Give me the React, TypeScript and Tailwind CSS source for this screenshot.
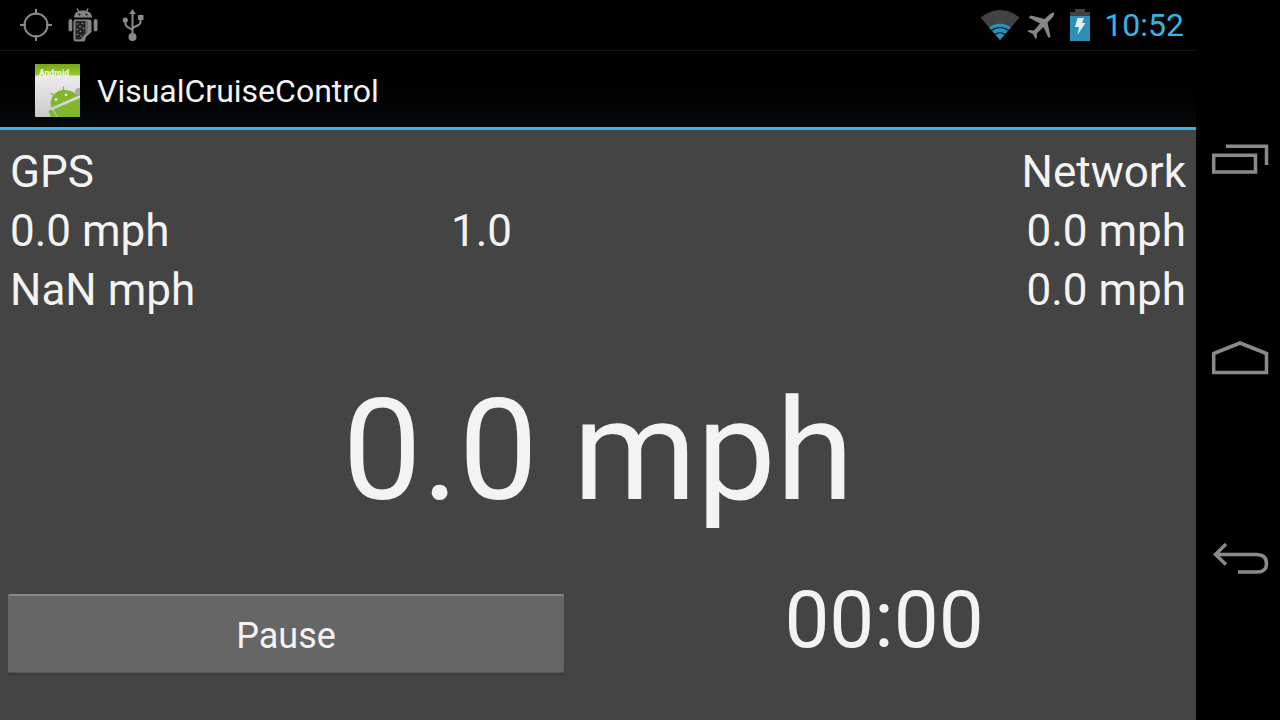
import React from "react";

function GpsIcon() {
  return (
    <svg width="32" height="34" viewBox="0 0 32 34" fill="none" stroke="#8a8a8a" strokeWidth="2" aria-hidden="true">
      <circle cx="16" cy="17" r="11.5" />
      <path d="M16 1v6M16 27v6M0 17h6M26 17h6" />
    </svg>
  );
}

function DebugIcon() {
  return (
    <svg width="30" height="34" viewBox="0 0 30 34" aria-hidden="true">
      <g fill="#858585">
        <path d="M6 9.500C6 5 10 2.500 15 2.500S24 5 24 9.500Z" />
        <rect x="0.500" y="11" width="3.800" height="12.500" rx="1.900" />
        <rect x="25.700" y="11" width="3.800" height="12.500" rx="1.900" />
        <path d="M8 11.500H21C23 11.500 23.500 12.500 23.500 14V24L18 29L16.500 33.500H8C6 33.500 5.500 32 5.500 31V14C5.500 12 6 11.500 8 11.500Z" />
      </g>
      <path d="M9 0.500L11 4M20 0.500L18.500 4" stroke="#858585" strokeWidth="1.500" />
      <path d="M7.500 13H17.500V25L12.500 31.500H7.500Z" fill="#242424" />
      <path d="M19 13V24L13 31" fill="none" stroke="#555" strokeWidth="1" />
      <g fill="#929292">
        <circle cx="9.500" cy="16" r="0.800" /><circle cx="14.500" cy="15.500" r="0.800" />
        <circle cx="12" cy="18.500" r="0.800" /><circle cx="15.500" cy="20.500" r="0.800" />
        <circle cx="9.500" cy="21.500" r="0.800" /><circle cx="12.500" cy="23.500" r="0.800" />
        <circle cx="9.500" cy="26.500" r="0.800" /><circle cx="13" cy="28" r="0.800" />
      </g>
      <circle cx="11.500" cy="6.500" r="1" fill="#111" />
      <circle cx="18.500" cy="6.500" r="1" fill="#111" />
    </svg>
  );
}

function UsbIcon() {
  return (
    <svg width="22" height="34" viewBox="0 0 22 34" aria-hidden="true">
      <path d="M10.500 4V28M3.500 13V16Q3.500 18 5.500 19L10.500 22M18.500 9V14Q18.500 16 16.500 17L10.500 20" fill="none" stroke="#8a8a8a" strokeWidth="2" />
      <g fill="#8a8a8a">
        <path d="M10.500 1L14 6H7Z" />
        <circle cx="3.300" cy="12" r="2.600" />
        <rect x="16" y="7" width="5.500" height="5" />
        <circle cx="10.500" cy="29" r="4" />
      </g>
    </svg>
  );
}

function WifiIcon() {
  return (
    <svg width="40" height="32" viewBox="0 0 40 32" aria-hidden="true">
      <path d="M0.500 8.500Q20-6.500 39.500 8.500L20 31Z" fill="#424242" />
      <path d="M9 18.200Q20 10.800 31 18.200L20 31Z" fill="#2b91ba" />
      <path d="M11 21.500Q20 15.500 29 21.500M14.500 25.500Q20 22 25.500 25.500" fill="none" stroke="#061216" strokeWidth="1.200" />
    </svg>
  );
}

function AirplaneIcon() {
  return (
    <svg width="28" height="30" viewBox="0 -2 28 30" aria-hidden="true">
      <path d="M27 0.500C25.500 0 23.500 1.500 22 3L17.500 7L4 3.500L1.500 5.500L13 11.500L7 18.500L2 18L0.500 19.500L6 22L8.500 27L10 25.500L9.800 21.500L16.500 15L21.500 26L23.500 24.500L20.500 10.500L25 6C26.500 4.500 27.500 2 27 0.500Z" fill="#868686" />
    </svg>
  );
}

function BatteryIcon() {
  return (
    <svg width="20" height="32" viewBox="0 0 20 32" aria-hidden="true">
      <path d="M0 3H5V0H15V3H20V7H0Z" fill="#424242" />
      <rect y="7" width="20" height="25" fill="#2e8fb7" />
      <path d="M7.500 9H14L12 14H15.500L7.500 26L9 18H5Z" fill="#e0edf1" />
    </svg>
  );
}

function AppIcon() {
  return (
    <svg width="46" height="54" viewBox="0 0 46 54" aria-hidden="true">
      <defs>
        <linearGradient id="paper" x1="0" y1="0" x2="0" y2="1">
          <stop offset="0" stopColor="#f5f5f5" />
          <stop offset="1" stopColor="#cacaca" />
        </linearGradient>
        <linearGradient id="band" x1="0" y1="0" x2="0" y2="1">
          <stop offset="0" stopColor="#76a51a" />
          <stop offset="1" stopColor="#98cb32" />
        </linearGradient>
        <clipPath id="page"><rect width="45" height="53" rx="1" /></clipPath>
      </defs>
      <g clipPath="url(#page)">
        <rect width="45" height="53" fill="url(#paper)" />
        <rect width="45" height="11.500" fill="url(#band)" />
        <text x="4" y="12" fill="#f7ffe8" fontFamily="Roboto, sans-serif" fontSize="8.500" fontWeight="700">Android</text>
        <circle cx="44" cy="28" r="4" fill="#aaa" />
        <g fill="#83b62c">
          <path d="M16.500 43.500C13.500 35 20 26.500 28 26C35 25.500 40.500 28.500 42.500 32Z" />
          <path d="M18.500 45.500L45 34V53H23Z" />
          <path d="M13.500 47.500C15 45 17.500 45.500 19 48L22 53H16Z" />
        </g>
        <path d="M20 32L15.500 29M28.500 27V22.500" stroke="#83b62c" strokeWidth="1.300" />
        <circle cx="21" cy="35.500" r="1.300" fill="#f5f5f5" />
        <circle cx="31" cy="31" r="1.300" fill="#f5f5f5" />
      </g>
    </svg>
  );
}

function RecentsIcon() {
  return (
    <svg width="58" height="32" viewBox="0 0 58 32" fill="none" stroke="#8a8a8a" strokeWidth="3.500" aria-hidden="true">
      <path d="M2.700 12.200H44.500V29H2.700ZM15 3.200H55.500V22" />
    </svg>
  );
}

function HomeIcon() {
  return (
    <svg width="58" height="36" viewBox="0 0 58 36" fill="none" stroke="#8a8a8a" strokeWidth="3.500" aria-hidden="true">
      <path d="M2.700 31.500V12.500L29 2L55.500 12.500V31.500Z" />
    </svg>
  );
}

function BackIcon() {
  return (
    <svg width="58" height="32" viewBox="0 0 58 32" fill="none" stroke="#8a8a8a" strokeWidth="3.500" aria-hidden="true">
      <path d="M4.500 12.500H45Q55.500 12.500 55.500 21.500T45 30H27M15 2L4.500 12.500L15 22.500" />
    </svg>
  );
}

export default function App() {
  return (
    <div className="flex min-h-screen bg-black font-['Roboto',sans-serif] text-[#f3f3f3]">
      <div className="flex min-w-0 flex-1 flex-col">
        <div className="flex h-[51px] items-center justify-between border-b border-[#151515] pr-3 pl-5">
          <div className="flex items-center gap-4">
            <GpsIcon />
            <DebugIcon />
            <span className="pl-2"><UsbIcon /></span>
          </div>
          <div className="flex items-center">
            <WifiIcon />
            <span className="pl-[7px]"><AirplaneIcon /></span>
            <span className="pl-[15px]"><BatteryIcon /></span>
            <time className="pl-[14px] text-[32px] leading-10 text-[#33b5e5]">10:52</time>
          </div>
        </div>
        <header className="flex h-[79px] items-center gap-4 border-b-[3px] border-[#33b5e5] bg-linear-to-b from-black to-[#07090b] px-[35px] pt-[3px]">
          <AppIcon />
          <h1 className="text-[32px] leading-10">VisualCruiseControl</h1>
        </header>
        <main className="flex flex-1 flex-col bg-[#444444] pt-[13px]">
          <div className="grid grid-cols-[3fr_2fr_3fr] px-[10px] text-[44px] leading-[59px]">
            <p>GPS</p>
            <p />
            <p className="text-right">Network</p>
            <p>0.0 mph</p>
            <p>1.0</p>
            <p className="text-right">0.0 mph</p>
            <p>NaN mph</p>
            <p />
            <p className="text-right">0.0 mph</p>
          </div>
          <p className="flex flex-1 items-center justify-center pt-2 text-[141px] leading-[170px]">0.0 mph</p>
          <div className="grid grid-cols-[11fr_12fr] items-start pb-[47px]">
            <button type="button" className="mx-2 mt-[21px] h-[79px] rounded-xs border-t-2 border-b border-t-[#888888] border-b-[#585858] bg-[#666666] pt-1 text-[36px] shadow-[0_2px_1px_#3a3a3a]">Pause</button>
            <p className="text-center text-[80px] leading-[94px]">00:00</p>
          </div>
        </main>
      </div>
      <nav className="flex w-[84px] shrink-0 flex-col items-center justify-between pt-[143px] pb-[146px] pl-1">
        <button type="button" aria-label="Recent apps"><RecentsIcon /></button>
        <button type="button" aria-label="Home"><HomeIcon /></button>
        <button type="button" aria-label="Back"><BackIcon /></button>
      </nav>
    </div>
  );
}
